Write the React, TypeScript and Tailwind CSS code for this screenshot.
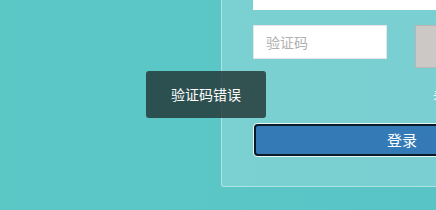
import React from "react";

export default function App() {
  const font = { fontFamily: '"Noto Sans CJK SC", "Microsoft YaHei", sans-serif' };
  return (
    <div
      className="relative w-[436px] h-[210px] overflow-hidden bg-gradient-to-r from-[#5cc8c6] to-[#58c4c6]"
      style={font}
    >
      <div className="flex pl-[221px]">
        <div className="-mt-[40px] w-[360px] h-[227px] shrink-0 rounded-b-[3px] border border-white/40 bg-white/20 pl-[31px] pt-[0px]">
          <div className="h-[49px] w-[297px] bg-white" />
          <div className="mt-[15px] flex items-start">
            <div className="flex h-[34px] w-[134px] items-center bg-white pl-[12px] text-[14px] text-[#b0b0b0] border border-[#e6e6e6]">
              验证码
            </div>
            <div className="ml-[28px] h-[43px] w-[100px] border border-[#b9b6b3] bg-[#cbc8c6]" />
          </div>
          <div className="mt-[17px] flex h-[22px] items-center pl-[180px] text-[14px] text-white">
            看不清
          </div>
          <div className="mt-[16px] w-[298px] rounded-[4px] border border-white/80 p-0">
            <div className="flex h-[32px] items-center justify-center rounded-[4px] border-2 border-[#0c1a26] bg-[#337ab7] text-[15px] text-white">
              登录
            </div>
          </div>
        </div>
      </div>
      <div className="absolute left-[146px] top-[71px] flex h-[47px] w-[120px] items-center justify-center rounded-[3px] bg-[rgba(34,54,53,0.82)] text-[14px] text-white">
        验证码错误
      </div>
    </div>
  );
}
